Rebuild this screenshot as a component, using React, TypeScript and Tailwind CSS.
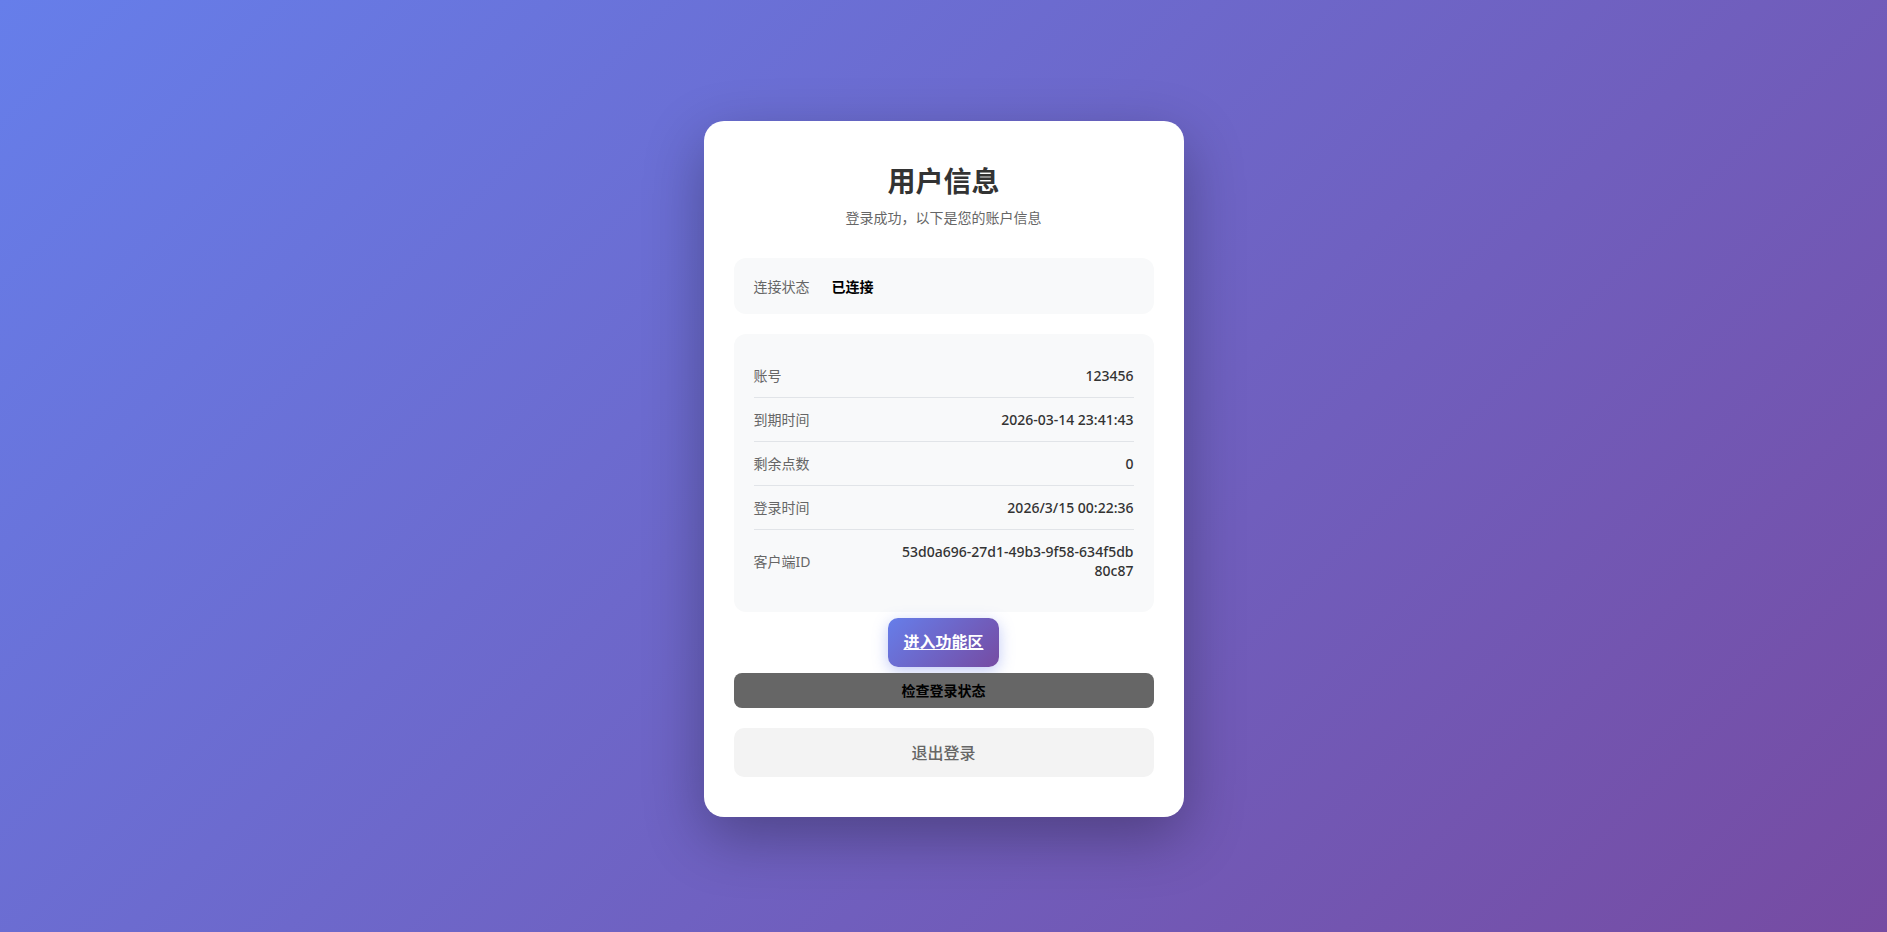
import React from "react";

const rows: [string, string][] = [
  ["账号", "123456"],
  ["到期时间", "2026-03-14 23:41:43"],
  ["剩余点数", "0"],
  ["登录时间", "2026/3/15 00:22:36"],
  ["客户端ID", "53d0a696-27d1-49b3-9f58-634f5db80c87"],
];

export default function App() {
  return (
    <div
      className="min-h-screen w-full pt-[6px] flex items-center justify-center bg-[linear-gradient(135deg,#667eea_0%,#764ba2_100%)]"
      style={{ fontFamily: '"Noto Sans", "Noto Sans CJK SC", sans-serif' }}
    >
      <div className="w-[480px] bg-white rounded-[20px] px-[30px] pt-[40px] pb-[40px] shadow-[0_20px_60px_rgba(0,0,0,0.3)]">
        <h1 className="text-center text-[28px] leading-[40px] font-bold text-[#333] mb-[7px]">用户信息</h1>
        <p className="text-center text-[14px] leading-[20px] text-[#666] mb-[30px]">登录成功，以下是您的账户信息</p>

        <div className="bg-[#f8f9fa] rounded-[12px] px-[20px] h-[56px] flex items-center text-[14px] mb-[20px]">
          <span className="text-[#666] w-[78px]">连接状态</span>
          <span className="font-bold text-black">已连接</span>
        </div>

        <div className="bg-[#f8f9fa] rounded-[12px] p-[20px]">
          {rows.map(([k, v], i) => (
            <div
              key={k}
              className={`flex items-center justify-between py-[12px] text-[14px] leading-[19px] ${i < rows.length - 1 ? "border-b border-[#e1e4e8]" : ""}`}
            >
              <span className="text-[#666]">{k}</span>
              <span className="text-[#333] font-medium text-right max-w-[62%] break-all">{v}</span>
            </div>
          ))}
        </div>

        <div className="flex justify-center mt-[6px]">
          <a
            href="#"
            className="inline-block px-[15px] py-[12px] text-[16px] leading-[25px] font-bold text-white underline rounded-[10px] bg-[linear-gradient(135deg,#667eea_0%,#764ba2_100%)] shadow-[0_4px_15px_rgba(102,126,234,0.4)]"
          >
            进入功能区
          </a>
        </div>

        <button className="mt-[6px] w-full h-[35px] rounded-[8px] bg-[#666] text-black font-bold text-[14px]">
          检查登录状态
        </button>

        <button className="mt-[20px] w-full h-[49px] rounded-[10px] bg-[#f3f3f3] text-[#666] font-medium text-[16px]">
          退出登录
        </button>
      </div>
    </div>
  );
}
